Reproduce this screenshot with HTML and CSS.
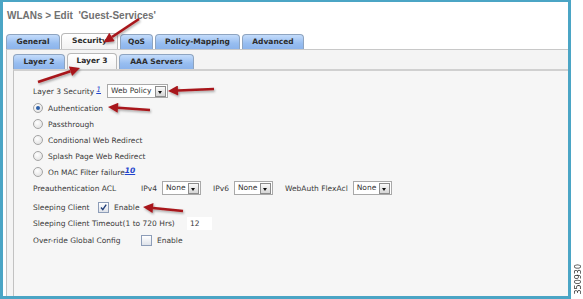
FILE: index.html
```html
<!DOCTYPE html>
<html lang="en">
<head>
    <meta charset="UTF-8">
    <title>WLANs &gt; Edit</title>
    <link rel="stylesheet" href="styles.css">
</head>
<body>
<div class="shot">
    <div class="frame">
        <div class="title">WLANs &gt; Edit &nbsp;'Guest-Services'</div>

        <div class="tabs">
            <span class="tab w-general">General</span>
            <span class="tab active w-security">Security</span>
            <span class="tab w-qos">QoS</span>
            <span class="tab w-policy">Policy-Mapping</span>
            <span class="tab w-advanced">Advanced</span>
        </div>

        <div class="panel">
            <div class="subtabs">
                <span class="tab sub w-layer2">Layer 2</span>
                <span class="tab sub active w-layer3">Layer 3</span>
                <span class="tab sub w-aaa">AAA Servers</span>
            </div>

            <div class="inner">
                <div class="row first">
                    <span>Layer 3 Security</span>
                    <a class="note">1</a>
                    <span class="select sel-policy">Web Policy<span class="drop"></span></span>
                </div>
                <div class="row gap1"><span class="radio on"></span><span>Authentication</span></div>
                <div class="row"><span class="radio"></span><span>Passthrough</span></div>
                <div class="row"><span class="radio"></span><span>Conditional Web Redirect</span></div>
                <div class="row"><span class="radio"></span><span>Splash Page Web Redirect</span></div>
                <div class="row"><span class="radio"></span><span>On MAC Filter failure</span><a class="note bold">10</a></div>
                <div class="row">
                    <span class="lbl-acl">Preauthentication ACL</span>
                    <span>IPv4</span>
                    <span class="select sel-none">None<span class="drop"></span></span>
                    <span class="ml12">IPv6</span>
                    <span class="select sel-none">None<span class="drop"></span></span>
                    <span class="ml12">WebAuth FlexAcl</span>
                    <span class="select sel-none">None<span class="drop"></span></span>
                </div>
                <div class="row gap3">
                    <span class="lbl-sleep">Sleeping Client</span>
                    <span class="check on">
                        <svg width="9" height="9" viewBox="0 0 9 9"><path d="M2 4.5 L3.8 6.6 L7.2 1.6" fill="none" stroke="#23407a" stroke-width="1.4"/></svg>
                    </span>
                    <span>Enable</span>
                </div>
                <div class="row">
                    <span class="lbl-timeout">Sleeping Client Timeout(1 to 720 Hrs)</span>
                    <span class="textbox">12</span>
                </div>
                <div class="row gap1">
                    <span class="lbl-override">Over-ride Global Config</span>
                    <span class="check"></span>
                    <span>Enable</span>
                </div>
            </div>
        </div>
    </div>
    <div class="figno">350930</div>

    <!-- callout arrows drawn over the screenshot -->
    <svg class="arrows" width="583" height="299" viewBox="0 0 583 299">
        <defs>
            <filter id="shadow" x="-20%" y="-40%" width="140%" height="180%">
                <feDropShadow dx="1" dy="1.5" stdDeviation="1" flood-color="#000" flood-opacity="0.35"/>
            </filter>
            <marker id="head" viewBox="0 0 10 10" refX="0" refY="5" markerWidth="11" markerHeight="10" markerUnits="userSpaceOnUse" orient="auto">
                <path d="M0,0 L10,5 L0,10 z" fill="#a8161a"/>
            </marker>
        </defs>
        <g filter="url(#shadow)" stroke="#a8161a" stroke-width="2.6" marker-end="url(#head)">
            <line x1="139" y1="19" x2="112" y2="37"/>
            <line x1="38" y1="82" x2="70.5" y2="71.2"/>
            <line x1="214" y1="89" x2="178" y2="90.5"/>
            <line x1="150" y1="110" x2="118" y2="107.7"/>
            <line x1="183" y1="211" x2="153" y2="208"/>
        </g>
    </svg>
</div>
</body>
</html>
```

FILE: styles.css
```css
body {
    margin: 0;
    background: #fff;
    font-family: "DejaVu Sans", Verdana, sans-serif;
    font-size: 7.5px;
    color: #3a3a3a;
}
.shot {
    position: relative;
    width: 583px;
    height: 299px;
    display: flex;
}
.frame {
    width: 566px;
    height: 294px;
    border: 3px solid #4ba5c5;
    border-top-width: 2px;
    background: #fff;
    display: flex;
    flex-direction: column;
}
.title {
    font-family: "Liberation Sans", Arial, sans-serif;
    font-weight: bold;
    font-size: 10px;
    color: #707070;
    padding: 8px 0 0 4px;
    height: 23px;
}
.tabs {
    display: flex;
    align-items: flex-end;
    gap: 1px;
    margin-left: 3px;
    height: 16px;
}
.tab {
    box-sizing: border-box;
    height: 15px;
    line-height: 14px;
    text-align: center;
    font-weight: bold;
    color: #2c2c2c;
    border: 1px solid #8ea4c0;
    border-bottom: none;
    border-radius: 4px 4px 0 0;
    background: linear-gradient(#c4dcfb, #97bdf0 60%, #8cb4ec);
}
.tab.active {
    height: 16px;
    border-color: #b8b8b8;
    background: linear-gradient(#ffffff, #f2f2f2);
}
.w-general { width: 54px; }
.w-security { width: 57px; }
.w-qos { width: 33px; margin-left: 1px; }
.w-policy { width: 85px; margin-left: 1px; }
.w-advanced { width: 62px; margin-left: 1px; }
.w-layer2 { width: 52px; }
.w-layer3 { width: 50px; margin-left: 1px; }
.w-aaa { width: 75px; margin-left: 1px; }
.panel {
    flex: 1;
    margin-left: 3px;
    border-left: 1px solid #c2c2c2;
    border-top: 1px solid #c8c8c8;
    background: #f4f4f4;
    display: flex;
    flex-direction: column;
}
.subtabs {
    display: flex;
    align-items: flex-end;
    gap: 1px;
    padding-left: 6px;
    height: 19px;
}
.inner {
    flex: 1;
    margin-left: 6px;
    border-left: 1px solid #c2c2c2;
    border-top: 2px solid #d0d0d0;
    background: #f6f6f6;
    padding: 12px 0 0 19px;
}
.row {
    height: 16px;
    display: flex;
    align-items: center;
}
.gap1 {
    margin-top: 1px;
}
.gap3 {
    margin-top: 3px;
}
.note {
    color: #2244cc;
    text-decoration: underline;
    font-style: italic;
    margin-left: 2px;
    position: relative;
    top: -2px;
}
.note.bold {
    font-weight: bold;
    margin-left: 0;
}
.select {
    position: relative;
    height: 12px;
    line-height: 12px;
    padding-left: 3px;
    background: #fff;
    border: 1px solid #a9a9a9;
    color: #333;
    margin-left: 5px;
}
.sel-policy {
    width: 56px;
    margin-left: 6px;
}
.sel-none {
    width: 34px;
    margin-left: 5px;
}
.drop {
    position: absolute;
    right: 1px;
    top: 1px;
    width: 9px;
    height: 9px;
    border: 1px solid #8c8c8c;
    background: linear-gradient(#fafafa, #d6d6d6);
}
.drop::after {
    content: "";
    position: absolute;
    left: 2px;
    top: 4px;
    border-left: 2.5px solid transparent;
    border-right: 2.5px solid transparent;
    border-top: 3px solid #111;
}
.radio {
    width: 8px;
    height: 8px;
    border: 1px solid #a4a4a4;
    border-radius: 50%;
    background: radial-gradient(circle at 40% 35%, #fff, #dcdcdc);
    margin-right: 5px;
    position: relative;
}
.radio.on::after {
    content: "";
    position: absolute;
    left: 2px;
    top: 2px;
    width: 4px;
    height: 4px;
    border-radius: 50%;
    background: #2b5fa8;
}
.lbl-acl {
    width: 108px;
}
.ml12 {
    margin-left: 12px;
}
.lbl-sleep {
    width: 65px;
}
.check {
    width: 9px;
    height: 9px;
    border: 1px solid #8d9db8;
    background: linear-gradient(#ffffff, #dfe3ea);
    margin-right: 5px;
    display: flex;
}
.lbl-timeout {
    width: 154px;
}
.textbox {
    width: 22px;
    height: 13px;
    line-height: 13px;
    background: #fff;
    padding-left: 3px;
}
.lbl-override {
    width: 108px;
}
.figno {
    writing-mode: vertical-rl;
    transform: rotate(180deg);
    align-self: flex-end;
    font-family: "DejaVu Sans", sans-serif;
    font-size: 8px;
    color: #333;
    margin: 0 0 4px 3px;
}
.arrows {
    position: absolute;
    left: 0;
    top: 0;
}
```
